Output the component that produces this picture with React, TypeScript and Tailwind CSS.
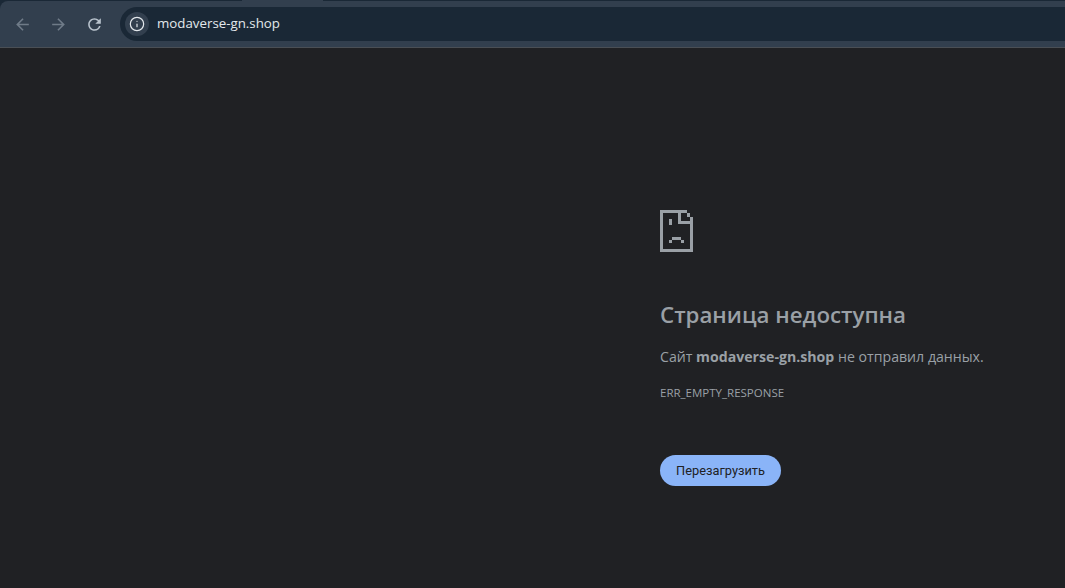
import React from 'react'
import { Info } from 'lucide-react'

const App = () => {
  return (
    <div className="h-[588px] w-[1065px] overflow-hidden bg-[#202124] font-['Open_Sans','Noto_Sans',sans-serif]">
      {/* Toolbar */}
      <div className="h-[48px] border-b border-[#4a4f55] bg-[#1a2836]">
        <div className="ml-[242px] h-[1px] w-[81px] bg-[#323f4e]" />
        <div className="flex h-[46px] items-center rounded-tl-[8px] bg-[#323f4e] pl-[4px]">
          <button className="flex h-[34px] w-[36px] items-center justify-center text-[#6f7b88]">
            <svg width="19" height="19" viewBox="0 0 24 24" fill="currentColor">
              <path d="M20 11H7.83l5.59-5.59L12 4l-8 8 8 8 1.41-1.41L7.83 13H20v-2z" />
            </svg>
          </button>
          <button className="flex h-[34px] w-[36px] items-center justify-center text-[#6f7b88]">
            <svg width="19" height="19" viewBox="0 0 24 24" fill="currentColor">
              <path d="M4 11h12.17l-5.59-5.59L12 4l8 8-8 8-1.41-1.41L16.17 13H4v-2z" />
            </svg>
          </button>
          <button className="flex h-[34px] w-[36px] items-center justify-center text-[#b9c3cd]">
            <svg width="19" height="19" viewBox="0 0 24 24" fill="currentColor">
              <path d="M17.65 6.35A7.958 7.958 0 0 0 12 4c-4.42 0-7.99 3.58-7.99 8s3.57 8 7.99 8c3.73 0 6.84-2.55 7.73-6h-2.08A5.99 5.99 0 0 1 12 18c-3.31 0-6-2.69-6-6s2.69-6 6-6c1.66 0 3.14.69 4.22 1.78L13 11h7V4l-2.35 2.35z" />
            </svg>
          </button>
          <div className="ml-[8px] flex h-[34px] flex-1 items-center rounded-l-full bg-[#1a2836] pl-[5px]">
            <div className="flex h-[24px] w-[24px] items-center justify-center rounded-full bg-[#323f4e] text-[#e3e8ec]">
              <Info size={16} strokeWidth={1.8} />
            </div>
            <span className="ml-[8px] text-[13.3px] text-[#e3e8ec]">modaverse-gn.shop</span>
          </div>
        </div>
      </div>

      {/* Error page */}
      <div className="pl-[660px] pt-[162px]">
        <svg width="33" height="42" viewBox="0 0 33 42" shapeRendering="crispEdges" fill="#9aa0a6" className="block">
          <path
            fillRule="evenodd"
            d="M0 0H27V3H30V7H33V42H0ZM3 3V39H30V14H18V3ZM21 3V11H30V7H27V3Z"
          />
          <rect x="9" y="9" width="3" height="6" />
          <rect x="12" y="27" width="9" height="3" />
          <rect x="9" y="30" width="3" height="3" />
          <rect x="21" y="30" width="3" height="3" />
        </svg>
        <h1 className="mt-[48px] text-[22.3px] font-semibold leading-[30px] text-[#9aa0a6]">Страница недоступна</h1>
        <p className="mt-[17px] text-[14.15px] leading-[20px] text-[#9aa0a6]">
          Сайт <b className="font-bold">modaverse-gn.shop</b> не отправил данных.
        </p>
        <div className="mt-[18px] text-[11.5px] leading-[16px] text-[#9aa0a6]">ERR_EMPTY_RESPONSE</div>
        <button className="mt-[54px] flex h-[31px] w-[121px] items-center justify-center rounded-full bg-[#8ab4f8] font-['Roboto',sans-serif] text-[12.8px] text-[#202124]">
          Перезагрузить
        </button>
      </div>
    </div>
  )
}

export default App
